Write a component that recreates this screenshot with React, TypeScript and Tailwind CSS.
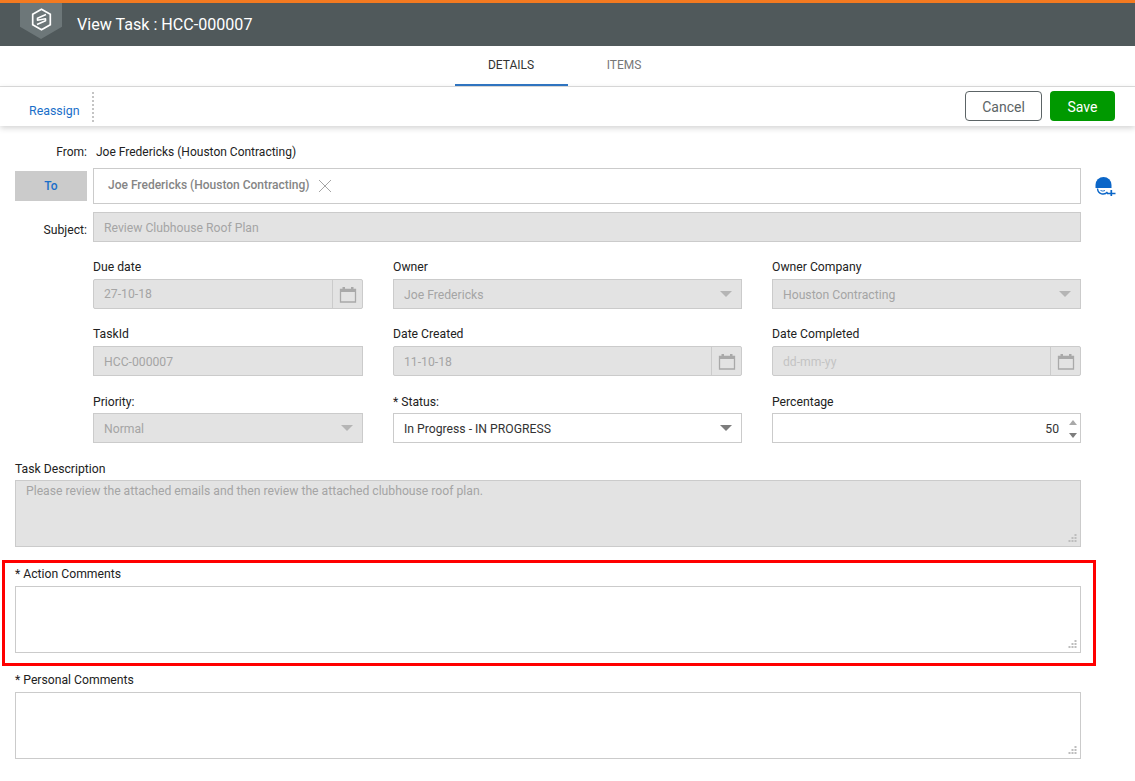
const FONT = "font-['Roboto',sans-serif]";

function Calendar() {
  return (
    <svg width="18" height="17" viewBox="0 0 18 17" fill="none" className="text-[#a9a9a9]">
      <path d="M1.500 3.500h15v12.500h-15z" stroke="currentColor" strokeWidth="1.300" />
      <path d="M1 3h16v3H1z" fill="currentColor" />
      <path d="M3.500 1h2.500v3H3.500zM12 1h2.500v3H12z" fill="currentColor" />
    </svg>
  );
}

function Caret({ color = "border-t-[#b5b5b5]" }: { color?: string }) {
  return <span className={`w-0 h-0 border-x-[6px] border-x-transparent border-t-[6px] ${color}`} />;
}

function Grip() {
  return (
    <svg width="9" height="9" viewBox="0 0 9 9" className="absolute right-[3px] bottom-[3px] fill-[#bdbdbd]">
      <rect x="6.500" y="0" width="2" height="2" />
      <rect x="3.500" y="3" width="2" height="2" />
      <rect x="6.500" y="3" width="2" height="2" />
      <rect x="0.500" y="6" width="2" height="2" />
      <rect x="3.500" y="6" width="2" height="2" />
      <rect x="6.500" y="6" width="2" height="2" />
    </svg>
  );
}

function Label({ low, children }: { low?: boolean; children: React.ReactNode }) {
  return <div className={`h-[18px] mb-[3px] text-[12.2px] text-[#222] ${low ? "leading-[20px]" : "leading-[18px]"}`}>{children}</div>;
}

function DateField({ label, value, faint, high }: { label: string; value: string; faint?: boolean; high?: boolean }) {
  return (
    <div>
      <Label>{label}</Label>
      <div className="h-[30px] flex bg-[#e3e3e3] border border-[#cbcbcb] rounded-[2px]">
        <div className={`flex-1 pl-[10px] text-[12.2px] ${high ? "leading-[29px]" : "leading-[30px]"} ${faint ? "text-[#c4c4c4]" : "text-[#a5a5a5]"}`}>{value}</div>
        <div className="w-[30px] border-l border-[#cbcbcb] flex items-center justify-center">
          <Calendar />
        </div>
      </div>
    </div>
  );
}

function TextField({ label, value }: { label: string; value: string }) {
  return (
    <div>
      <Label>{label}</Label>
      <div className="h-[30px] bg-[#e3e3e3] border border-[#cbcbcb] pl-[10px] text-[12.2px] leading-[30px] text-[#a5a5a5]">{value}</div>
    </div>
  );
}

function SelectField({ label, value, active, low }: { label: string; value: string; active?: boolean; low?: boolean }) {
  return (
    <div>
      <Label low={low}>{label}</Label>
      <div className={`h-[30px] flex items-center justify-between border border-[#cbcbcb] pl-[10px] pr-[9px] text-[12.2px] ${active ? "bg-white text-[#333]" : "bg-[#e3e3e3] text-[#a5a5a5]"}`}>
        <span className="pt-[2px]">{value}</span>
        <Caret color={active ? "border-t-[#7d7d7d]" : "border-t-[#b5b5b5]"} />
      </div>
    </div>
  );
}

function TextArea({ disabled, children }: { disabled?: boolean; children?: React.ReactNode }) {
  return (
    <div className={`relative h-[67px] border border-[#cbcbcb] px-[10px] py-[1px] text-[12.2px] leading-[18px] text-[#a5a5a5] ${disabled ? "bg-[#e3e3e3]" : "bg-white"}`}>
      {children}
      <Grip />
    </div>
  );
}

export default function App() {
  return (
    <div className={`${FONT} w-[1135px] h-[781px] overflow-hidden bg-white`}>
      <header className="h-[46px] bg-[#50595b] border-t-[3px] border-[#f47a20] flex items-center">
        <div className="ml-[20px] w-[42px] h-[36px] self-start bg-[#6d7779] [clip-path:polygon(0_0,100%_0,100%_66%,50%_100%,0_66%)] flex items-center justify-center pb-[3px]">
          <svg width="21" height="23" viewBox="0 0 21 23" fill="none" stroke="white" strokeWidth="1.700">
            <path d="M10.500 1.200l8.800 5v10.600l-8.800 5-8.800-5V6.200z" />
            <path d="M15 6.500L6.500 10.200v2L14.500 10.800v2L6 16.500" strokeWidth="1.600" strokeLinejoin="round" />
          </svg>
        </div>
        <h1 className="ml-[15px] text-[16.1px] text-white leading-[18px] pt-[1px]">View Task : HCC-000007</h1>
      </header>

      <nav className="h-[41px] border-b border-[#dedede] flex justify-center pl-[1px]">
        <div className="ml-[-1px] w-[113px] h-[40px] border-b-2 border-[#2f74c0] flex items-center justify-center text-[12px] text-[#333]">DETAILS</div>
        <div className="w-[113px] h-[38px] flex items-center justify-center text-[12px] text-[#777]">ITEMS</div>
      </nav>

      <div className="h-[39px] flex items-center shadow-[0_2px_6px_rgba(0,0,0,0.18)]">
        <a className="ml-[29px] text-[12.4px] text-[#1a6fc9] mt-[10px]">Reassign</a>
        <span className="ml-[12px] h-[30px] border-l-2 border-dotted border-[#c4c4c4]" />
        <div className="ml-auto mr-[20px] flex gap-[8px] mb-[2px]">
          <button className="w-[77px] h-[30px] border border-[#5c6466] rounded-[4px] text-[14px] pt-[3px] text-[#5c6466]">Cancel</button>
          <button className="w-[65px] h-[30px] bg-[#009900] rounded-[4px] text-[14px] pt-[3px] text-white">Save</button>
        </div>
      </div>

      <main className="pl-[15px] w-[1081px] pt-[17px]">
        <div className="flex h-[18px] items-center text-[12px] text-[#222]">
          <span className="w-[72px] text-right">From:</span>
          <span className="ml-[9px]">Joe Fredericks (Houston Contracting)</span>
        </div>

        <div className="relative mt-[7px] flex items-center gap-[6px]">
          <div className="w-[72px] h-[30px] bg-[#cbcbcb] text-[12px] font-medium text-[#1a6fc9] flex items-center justify-center">To</div>
          <div className="flex-1 h-[36px] border border-[#cbcbcb] flex items-center pl-[14px] text-[12px] font-medium text-[#858585]">
            <span className="-mt-[3px]">Joe Fredericks (Houston Contracting)</span>
            <svg width="14" height="14" viewBox="0 0 14 14" className="ml-[8px] -mt-[1px] stroke-[#a5a5a5]" strokeWidth="1">
              <path d="M1 1l12 12M13 1L1 13" />
            </svg>
          </div>
          <svg width="22" height="22" viewBox="0 0 22 22" className="absolute left-[1079px] top-[6px]">
            <path d="M1.500 14v-3a8 8 0 0 1 16 0v3z" fill="#0b66c8" />
            <path d="M3.500 14.500c.5 6 7 7 10 3.500" fill="none" stroke="#0b66c8" strokeWidth="1.400" />
            <path d="M6.500 16.500q2.500 1.200 4.500 0" fill="none" stroke="#0b66c8" strokeWidth="0.900" />
            <path d="M13 19.500h8.500M17.300 16v7" stroke="#0b66c8" strokeWidth="1.700" />
          </svg>
        </div>

        <div className="mt-[8px] flex gap-[6px]">
          <span className="w-[72px] text-right text-[12.2px] leading-[18px] mt-[9px] text-[#222]">Subject:</span>
          <div className="flex-1 h-[30px] bg-[#e3e3e3] border border-[#cbcbcb] pl-[10px] text-[12.2px] leading-[30px] text-[#a5a5a5]">Review Clubhouse Roof Plan</div>
        </div>

        <div className="mt-[16px] ml-[78px] grid grid-cols-[270px_349px_309px] gap-x-[30px] gap-y-[16px]">
          <DateField high label="Due date" value="27-10-18" />
          <SelectField label="Owner" value="Joe Fredericks" />
          <SelectField label="Owner Company" value="Houston Contracting" />
          <TextField label="TaskId" value="HCC-000007" />
          <DateField label="Date Created" value="11-10-18" />
          <DateField label="Date Completed" value="dd-mm-yy" faint />
          <SelectField low label="Priority:" value="Normal" />
          <SelectField low label="* Status:" value="In Progress - IN PROGRESS" active />
          <div>
            <Label low>Percentage</Label>
            <div className="h-[30px] flex items-center justify-end border border-[#cbcbcb] pr-[21px] pt-[2px] text-[12.2px] text-[#333] relative">
              50
              <span className="absolute right-[3px] top-[6px] flex flex-col gap-[8px]">
                <span className="w-0 h-0 border-x-[4px] border-x-transparent border-b-[5px] border-b-[#a9a9a9]" />
                <span className="w-0 h-0 border-x-[4px] border-x-transparent border-t-[5px] border-t-[#7d7d7d]" />
              </span>
            </div>
          </div>
        </div>

        <div className="mt-[16px]">
          <Label low>Task Description</Label>
          <TextArea disabled>Please review the attached emails and then review the attached clubhouse roof plan.</TextArea>
        </div>

        <div className="mt-[13px] -ml-[13px] -mr-[15px] border-[3px] border-[#ff0000] pl-[10px] pr-[12px] pt-[2px] pb-[10px]">
          <Label>* Action Comments</Label>
          <TextArea />
        </div>

        <div className="mt-[5px]">
          <Label>* Personal Comments</Label>
          <TextArea />
        </div>
      </main>
    </div>
  );
}
